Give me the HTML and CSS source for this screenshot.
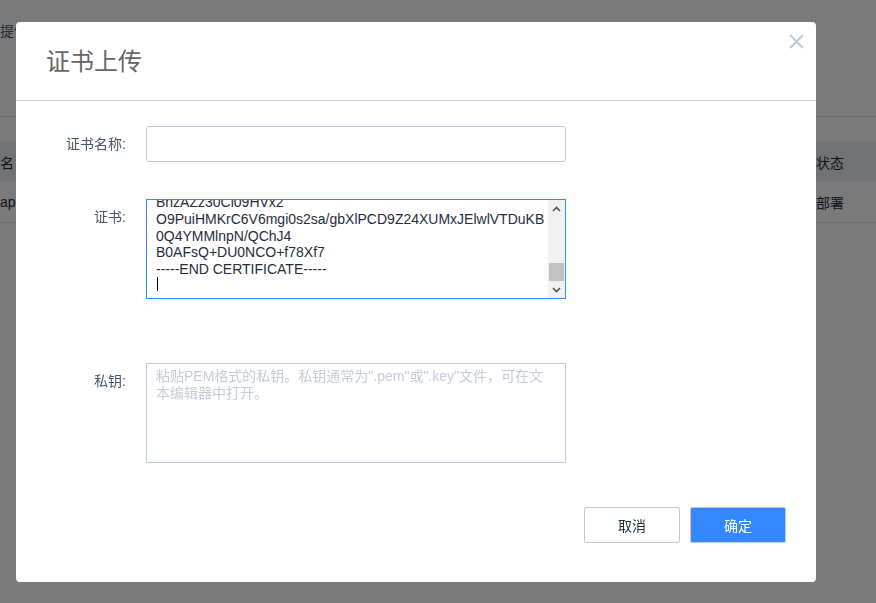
FILE: index.html
```html
<!DOCTYPE html>
<html lang="zh-CN">
<head>
<meta charset="utf-8">
<title>证书上传</title>
<link rel="stylesheet" href="styles.css">
</head>
<body>
<div class="page">
  <div class="page-tip">提供证书上传与部署服务</div>
  <div class="table">
    <div class="table-gap"></div>
    <div class="tr th">
      <div class="td first">名</div>
      <div class="td last"><span class="shift">部署状态</span></div>
    </div>
    <div class="tr row">
      <div class="td first">ap</div>
      <div class="td last">部署</div>
    </div>
  </div>
</div>

<div class="overlay"></div>

<div class="dialog">
  <div class="dialog-header">
    <span class="dialog-title">证书上传</span>
    <button class="dialog-close" type="button" aria-label="关闭">
      <svg width="15" height="15" viewBox="0 0 15 15"><path d="M1 1L14 14M14 1L1 14" stroke="#bfcbd9" stroke-width="2" fill="none"/></svg>
    </button>
  </div>
  <div class="dialog-body">
    <div class="form-item item-name">
      <label class="form-label">证书名称:</label>
      <div class="form-content"><input class="input" type="text"></div>
    </div>
    <div class="form-item item-cert">
      <label class="form-label">证书:</label>
      <div class="form-content"><textarea class="textarea cert focused">-----BEGIN CERTIFICATE-----
MIIFazCCBFOgAwIBAgISA3xK9m2ZpQn8Lr0Tq7VbH1yW
MA0GCSqGSIb3DQEB
CwUAMEoxCzAJBgNVBAYTAlVTMRYwFAYDVQQKEw1MZXRz
RW5jcnlwdDEjMCEG
b20wggEiMA0GCSqGSIb3DQEBAQUAA4IBDwAwggEKAoIB
AQC7kP2xQn8vLr9T
q3Wm5ZsY1dK0hJfG2aR6cVbN4oE8uI7pX3zLtMqHwS9y
BnzAZz30Cl09HVx2
O9PuiHMKrC6V6mgi0s2sa/gbXlPCD9Z24XUMxJElwlVTDuKB
0Q4YMMlnpN/QChJ4
B0AFsQ+DU0NCO+f78Xf7
-----END CERTIFICATE-----
</textarea><span class="caret"></span>
        <div class="scrollbar" aria-hidden="true">
          <div class="sb-btn">
            <svg width="9" height="6" viewBox="0 0 9 6"><path d="M1 5L4.5 1.5L8 5" stroke="#505050" stroke-width="1.6" fill="none"/></svg>
          </div>
          <div class="sb-track"><div class="sb-thumb"></div></div>
          <div class="sb-btn">
            <svg width="9" height="6" viewBox="0 0 9 6"><path d="M1 1L4.5 4.5L8 1" stroke="#505050" stroke-width="1.6" fill="none"/></svg>
          </div>
        </div>
      </div>
    </div>
    <div class="form-item item-key">
      <label class="form-label">私钥:</label>
      <div class="form-content"><textarea class="textarea" placeholder="粘贴PEM格式的私钥。私钥通常为&quot;.pem&quot;或&quot;.key&quot;文件，可在文&#10;本编辑器中打开。"></textarea></div>
    </div>
  </div>
  <div class="dialog-footer">
    <button class="btn" type="button">取消</button>
    <button class="btn btn-primary" type="button">确定</button>
  </div>
</div>
<script src="script.js"></script>
</body>
</html>
```

FILE: styles.css
```css
* { box-sizing: border-box; }
html, body { margin: 0; height: 100%; }
body {
  font-family: "Liberation Sans", "Noto Sans CJK SC", sans-serif;
  font-size: 14px;
  color: #1f2d3d;
  background: #fff;
  overflow: hidden;
}

/* page behind the mask */
.page { padding-top: 21px; }
.page-tip { line-height: 20px; color: #48576a; white-space: nowrap; }
.table { margin-top: 75px; border-top: 1px solid #dfe6ec; }
.table-gap { height: 25px; }
.tr {
  display: grid;
  grid-template-columns: 1fr 60px;
  height: 40px;
  align-items: center;
}
.th { background: #eef1f6; color: #1f2d3d; }
.row { border-bottom: 1px solid #dfe6ec; height: 41px; }
.td { white-space: nowrap; }
.shift { display: inline-block; margin-left: -28px; }

.overlay {
  position: fixed;
  inset: 0;
  background: rgba(0, 0, 0, 0.52);
}

/* dialog */
.dialog {
  position: absolute;
  left: 16px;
  top: 22px;
  width: 800px;
  height: 560px;
  background: #fff;
  border-radius: 4px;
  display: flex;
  flex-direction: column;
}
.dialog-header {
  height: 79px;
  border-bottom: 1px solid #c8d1db;
  display: flex;
  align-items: center;
  padding-left: 30px;
}
.dialog-title {
  flex: 1;
  font-size: 24px;
  color: #666;
  font-family: "Noto Sans CJK SC", sans-serif;
  line-height: 32px;
  margin-top: -2px;
}
.dialog-close {
  align-self: flex-start;
  margin: 12px 12px 0 0;
  padding: 0;
  border: 0;
  background: none;
  width: 15px;
  height: 15px;
  display: flex;
}

.dialog-body { padding-top: 25px; }
.form-item { display: flex; align-items: flex-start; }
.item-cert { margin-top: 37px; }
.item-key { margin-top: 64px; }
.form-label {
  width: 130px;
  padding-right: 20px;
  text-align: right;
  line-height: 36px;
  color: #48576a;
  font-size: 14px;
}
.form-content { position: relative; }
.input {
  display: block;
  width: 420px;
  height: 36px;
  border: 1px solid #bfcbd9;
  border-radius: 3px;
  padding: 0 10px;
  font: inherit;
  outline: none;
}
.textarea {
  display: block;
  width: 420px;
  height: 100px;
  border: 1px solid #bfcbd9;
  border-radius: 0;
  padding: 4px 9px;
  font-family: "Liberation Sans", "Noto Sans CJK SC", sans-serif;
  font-size: 14px;
  line-height: 16.67px;
  color: #1f2d3d;
  resize: none;
  outline: none;
  background: #fff;
  caret-color: transparent;
}
.textarea.cert {
  padding-right: 18px;
  white-space: pre;
  overflow-x: hidden;
}
.textarea.focused { border-color: #3a8ee6; }
.textarea::placeholder { color: #c5cdd8; line-height: 17px; }

/* drawn scrollbar over the certificate box */
.scrollbar {
  position: absolute;
  top: 1px;
  right: 1px;
  bottom: 1px;
  width: 17px;
  background: #f1f1f1;
  display: flex;
  flex-direction: column;
}
.sb-btn {
  height: 17px;
  display: flex;
  align-items: center;
  justify-content: center;
  flex: none;
}
.sb-track {
  flex: 1;
  display: flex;
  flex-direction: column;
  justify-content: flex-end;
}
.sb-thumb {
  height: 18px;
  margin: 0 1px;
  background: #c1c1c1;
}

.caret {
  position: absolute;
  left: 11px;
  top: 78px;
  width: 1px;
  height: 14px;
  background: #000;
}

.dialog-footer {
  display: flex;
  justify-content: flex-end;
  gap: 10px;
  padding: 44px 30px 0 0;
}
.btn {
  width: 96px;
  height: 36px;
  border: 1px solid #c8c8c8;
  border-radius: 2px;
  background: #fff;
  color: #1f2d3d;
  font-family: "Liberation Sans", "Noto Sans CJK SC", sans-serif;
  font-size: 14px;
  padding: 0;
}
.btn-primary {
  background: #3388ff;
  border-color: #c0c9d6;
  color: #fff;
}
```

FILE: script.js
```js
var ta = document.querySelector('.cert');
ta.focus();
ta.setSelectionRange(ta.value.length, ta.value.length);
ta.scrollTop = ta.scrollHeight;
```
